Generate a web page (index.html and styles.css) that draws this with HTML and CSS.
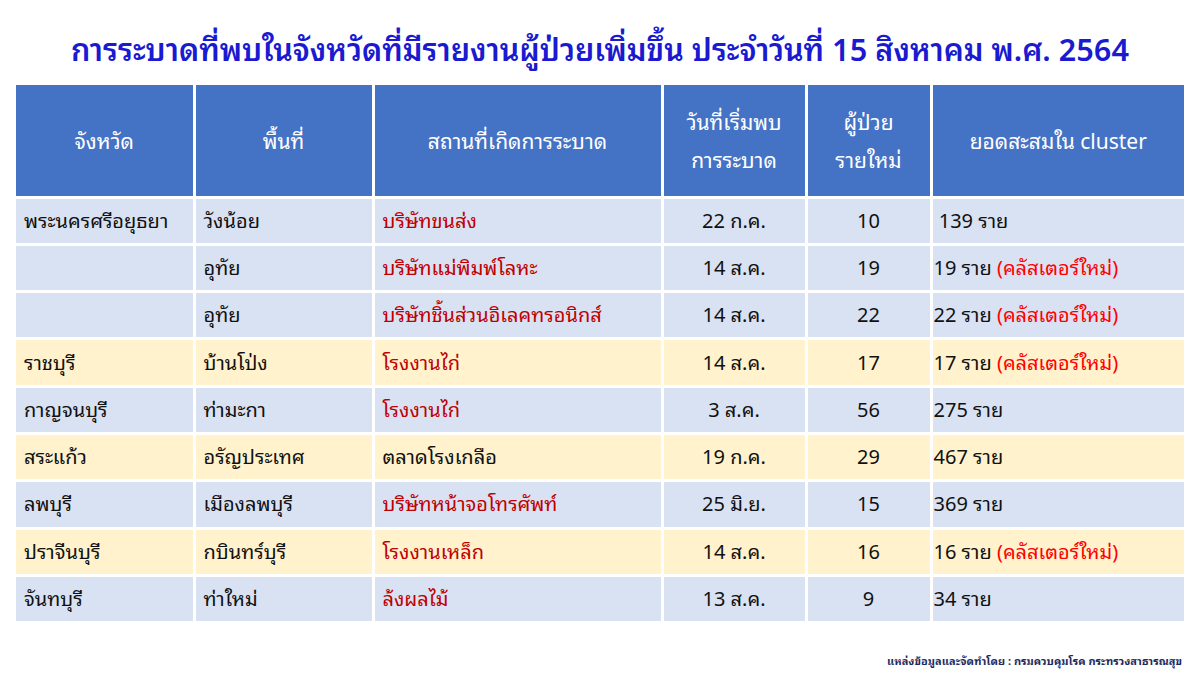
FILE: index.html
```html
<!DOCTYPE html>
<html lang="th">
<head>
<meta charset="utf-8">
<link rel="stylesheet" href="styles.css">
</head>
<body>
<div class="page">
  <h1 class="title">การระบาดที่พบในจังหวัดที่มีรายงานผู้ป่วยเพิ่มขึ้น ประจำวันที่ 15 สิงหาคม พ.ศ. 2564</h1>
  <table class="grid">
    <colgroup>
      <col class="c1"><col class="c2"><col class="c3"><col class="c4"><col class="c5"><col class="c6">
    </colgroup>
    <thead>
      <tr>
        <th>จังหวัด</th>
        <th>พื้นที่</th>
        <th>สถานที่เกิดการระบาด</th>
        <th>วันที่เริ่มพบ<br>การระบาด</th>
        <th>ผู้ป่วย<br>รายใหม่</th>
        <th>ยอดสะสมใน cluster</th>
      </tr>
    </thead>
    <tbody>
      <tr class="blue"><td>พระนครศรีอยุธยา</td><td>วังน้อย</td><td class="red">บริษัทขนส่ง</td><td class="ctr">22 ก.ค.</td><td class="ctr">10</td><td class="cum">&nbsp;139 ราย</td></tr>
      <tr class="blue"><td></td><td>อุทัย</td><td class="red">บริษัทแม่พิมพ์โลหะ</td><td class="ctr">14 ส.ค.</td><td class="ctr">19</td><td class="cum">19 ราย <span class="new">(คลัสเตอร์ใหม่)</span></td></tr>
      <tr class="blue"><td></td><td>อุทัย</td><td class="red">บริษัทชิ้นส่วนอิเลคทรอนิกส์</td><td class="ctr">14 ส.ค.</td><td class="ctr">22</td><td class="cum">22 ราย <span class="new">(คลัสเตอร์ใหม่)</span></td></tr>
      <tr class="yellow"><td>ราชบุรี</td><td>บ้านโป่ง</td><td class="red">โรงงานไก่</td><td class="ctr">14 ส.ค.</td><td class="ctr">17</td><td class="cum">17 ราย <span class="new">(คลัสเตอร์ใหม่)</span></td></tr>
      <tr class="blue"><td>กาญจนบุรี</td><td>ท่ามะกา</td><td class="red">โรงงานไก่</td><td class="ctr">3 ส.ค.</td><td class="ctr">56</td><td class="cum">275 ราย</td></tr>
      <tr class="yellow"><td>สระแก้ว</td><td>อรัญประเทศ</td><td>ตลาดโรงเกลือ</td><td class="ctr">19 ก.ค.</td><td class="ctr">29</td><td class="cum">467 ราย</td></tr>
      <tr class="blue"><td>ลพบุรี</td><td>เมืองลพบุรี</td><td class="red">บริษัทหน้าจอโทรศัพท์</td><td class="ctr">25 มิ.ย.</td><td class="ctr">15</td><td class="cum">369 ราย</td></tr>
      <tr class="yellow"><td>ปราจีนบุรี</td><td>กบินทร์บุรี</td><td class="red">โรงงานเหล็ก</td><td class="ctr">14 ส.ค.</td><td class="ctr">16</td><td class="cum">16 ราย <span class="new">(คลัสเตอร์ใหม่)</span></td></tr>
      <tr class="blue"><td>จันทบุรี</td><td>ท่าใหม่</td><td class="red">ล้งผลไม้</td><td class="ctr">13 ส.ค.</td><td class="ctr">9</td><td class="cum">34 ราย</td></tr>
    </tbody>
  </table>
  <div class="source">แหล่งข้อมูลและจัดทำโดย : กรมควบคุมโรค กระทรวงสาธารณสุข</div>
</div>
</body>
</html>
```
FILE: styles.css
```css
* { box-sizing: border-box; }
html, body {
  margin: 0;
  padding: 0;
  background: #ffffff;
}
body {
  font-family: "Noto Sans Thai Looped", "Tahoma", "Loma", "Garuda", "Noto Sans Thai", "Noto Sans", "Liberation Sans", sans-serif;
  color: #111111;
}
.page {
  width: 1200px;
  height: 675px;
  padding: 25px 16px 0 16px;
  display: flex;
  flex-direction: column;
}
.title {
  margin: 0;
  height: 60px;
  text-align: center;
  font-size: 30.5px;
  font-weight: 600;
  color: #1a1ad0;
  line-height: 46px;
  white-space: nowrap;
}
.grid {
  width: 1168px;
  border-collapse: collapse;
  table-layout: fixed;
}
.c1 { width: 178px; }
.c2 { width: 179px; }
.c3 { width: 289px; }
.c4 { width: 144px; }
.c5 { width: 125px; }
.c6 { width: 253px; }
.grid th {
  background: #4472c4;
  color: #ffffff;
  font-weight: 400;
  font-size: 21px;
  line-height: 38px;
  height: 112px;
  text-align: center;
  border: 3px solid #ffffff;
  padding: 0 4px;
}
.grid thead tr th { border-top: none; }
.grid td {
  height: 47.3px;
  font-size: 20px;
  font-weight: 450;
  border: 3px solid #ffffff;
  padding: 0 8px 4px 8px;
  white-space: nowrap;
  vertical-align: middle;
}
.grid tr > :first-child { border-left: none; }
.grid tr > :last-child { border-right: none; }
.blue td { background: #d9e2f3; }
.yellow td { background: #fff2cc; }
.red { color: #c00000; }
.ctr { text-align: center; }
.grid td.cum { padding-left: 1px; }
.new { color: #ff0000; }
.source {
  margin-top: auto;
  margin-bottom: 6px;
  text-align: right;
  font-size: 11px;
  font-weight: 700;
  color: #1f2a5c;
  padding-right: 2px;
}
```
